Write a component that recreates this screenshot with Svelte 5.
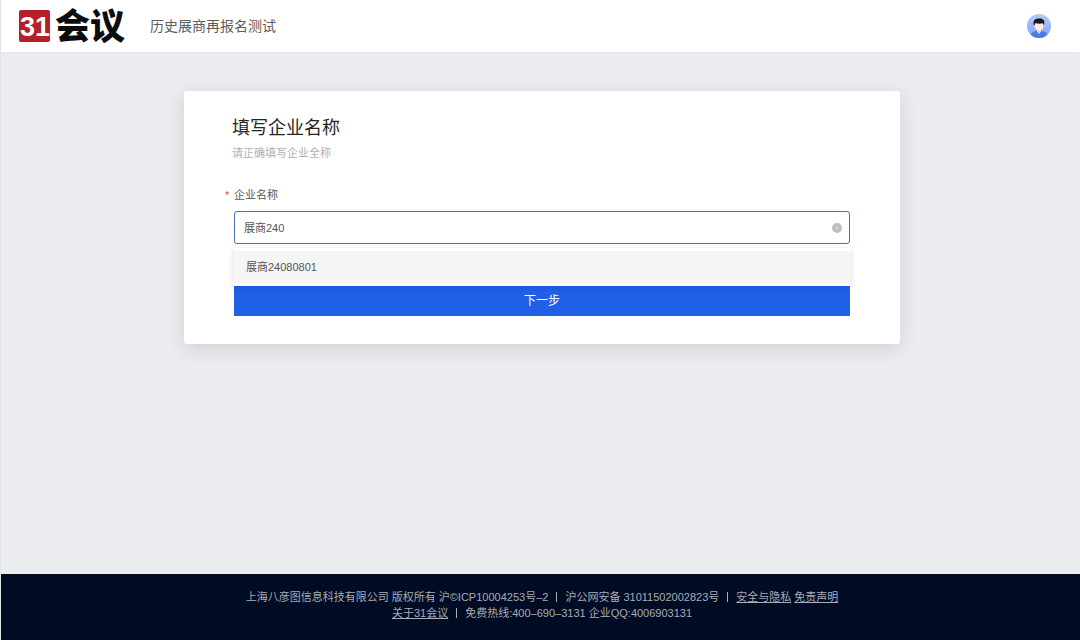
<script lang="ts">
  let company = $state("展商240");
  let suggestions = $state(["展商24080801"]);
  let open = $state(true);

  function pick(name: string) {
    company = name;
    open = false;
  }

  function clear() {
    company = "";
    open = false;
  }
</script>

<div class="page">
  <header class="topbar">
    <svg class="logo" width="112" height="52" viewBox="0 0 112 52" role="img" aria-label="31会议">
      <rect x="1" y="10" width="31" height="32" rx="2" fill="#b51f29" />
      <text class="logo-num" x="2" y="36">31</text>
      <text class="logo-name" x="37" y="39">会议</text>
    </svg>
    <span class="event">历史展商再报名测试</span>
    <button class="avatar" type="button" aria-label="用户">
      <svg width="24" height="24" viewBox="0 0 24 24" aria-hidden="true">
        <defs>
          <linearGradient id="sky" x1="0" y1="0" x2="0" y2="1">
            <stop offset="0" stop-color="#b4cbfa" />
            <stop offset="1" stop-color="#7fa3f2" />
          </linearGradient>
          <clipPath id="round"><circle cx="12" cy="12" r="12" /></clipPath>
        </defs>
        <g clip-path="url(#round)">
          <rect width="24" height="24" fill="url(#sky)" />
          <path d="M3 24c0-4.500 2.500-6.300 6-7h6c3.500.7 6 2.500 6 7z" fill="#4a7ce8" />
          <path d="M10 14h4v3.500l-2 2.500-2-2.500z" fill="#f3d3c6" />
          <path d="M7.500 8.500h9v3c0 3-2 5-4.500 5s-4.500-2-4.500-5z" fill="#fdebe3" />
          <path d="M6.800 11C5.800 7.500 7.200 4.800 11 4.600c4.200-.5 7 1.400 6.200 5l-.7 1.700-.8-2c-2.500.6-5.200.4-7.200-.2l-.8 1.900z" fill="#17181f" />
        </g>
      </svg>
    </button>
  </header>

  <main class="content">
    <form class="card" onsubmit={(e) => e.preventDefault()}>
      <h1>填写企业名称</h1>
      <p class="hint">请正确填写企业全称</p>

      <label for="company"><span class="star">*</span>企业名称</label>
      <div class="field">
        <input id="company" type="text" autocomplete="off" required bind:value={company} oninput={() => (open = true)} />
        <button class="clear" type="button" aria-label="清空" onclick={clear}>
          <svg width="10" height="10" viewBox="0 0 10 10" aria-hidden="true">
            <circle cx="5" cy="5" r="5" fill="#bfbfbf" />
            <path d="M3.500 3.500l3 3m0-3l-3 3" stroke="#d2d2d2" stroke-width="1" />
          </svg>
        </button>
        {#if open}
          <ul class="menu">
            {#each suggestions as name (name)}
              <li><button type="button" onclick={() => pick(name)}>{name}</button></li>
            {/each}
          </ul>
        {/if}
      </div>

      <button class="next" type="submit">下一步</button>
    </form>
  </main>

  <footer>
    <div>上海八彦图信息科技有限公司 版权所有 沪©ICP10004253号–2<i></i>沪公网安备 31011502002823号<i></i><a href="#privacy">安全与隐私</a> <a href="#disclaimer">免责声明</a></div>
    <div><a href="#about">关于31会议</a><i></i>免费热线:400–690–3131 企业QQ:4006903131</div>
  </footer>
</div>

<style>
  :global(body) {
    margin: 0;
  }
  .page {
    box-sizing: border-box;
    min-height: 100vh;
    display: flex;
    flex-direction: column;
    border-left: 1px solid #e4e5e8;
    background: #ebecf0;
    color: #555;
    font-family: "Liberation Sans", "Noto Sans CJK SC", sans-serif;
    font-size: 11px;
    line-height: 16px;
  }
  button,
  input {
    font: inherit;
    color: inherit;
  }
  button {
    padding: 0;
    border: 0;
    background: none;
    cursor: pointer;
  }

  .topbar {
    display: flex;
    align-items: center;
    height: 52px;
    padding: 0 29px 0 17px;
    background: #fff;
    box-shadow: 0 1px 2px rgba(0, 0, 0, 0.03);
  }
  .logo {
    flex: none;
    overflow: visible;
  }
  .logo-num {
    font: bold 27px "Liberation Sans", sans-serif;
    fill: #fff;
  }
  .logo-name {
    font: 900 35px "Noto Sans CJK SC", sans-serif;
    fill: #0c0c0c;
  }
  .event {
    margin-left: 20px;
    font-size: 14px;
    line-height: 20px;
    color: #5c5c5c;
  }
  .avatar {
    display: flex;
    margin-left: auto;
  }

  .content {
    flex: 1;
    padding: 39px 20px 40px 23px;
  }
  .card {
    box-sizing: border-box;
    max-width: 716px;
    margin: 0 auto;
    padding: 23px 50px 28px;
    border-radius: 3px;
    background: #fff;
    box-shadow: 0 5px 18px rgba(40, 50, 60, 0.14);
  }
  h1,
  .hint {
    margin: 0 0 0 -2px;
  }
  h1 {
    font-size: 18px;
    font-weight: 400;
    line-height: 28px;
    color: #262626;
  }
  .hint {
    padding: 3px 0 26px;
    color: #b0b0b0;
  }
  label {
    display: block;
    margin-left: -9px;
  }
  .star {
    display: inline-block;
    width: 9px;
    color: #f04b4b;
  }
  .field {
    position: relative;
    margin: 8px 0 42px;
  }
  input {
    display: block;
    box-sizing: border-box;
    width: 100%;
    height: 33px;
    padding: 0 32px 2px 9px;
    border: 1px solid #4a6cc0;
    border-radius: 3px;
    outline: none;
    background: #fff;
  }
  .clear {
    position: absolute;
    top: 12px;
    right: 8px;
    display: flex;
  }
  .menu {
    position: absolute;
    top: 100%;
    left: -1px;
    right: -1px;
    margin: 4px 0 0;
    padding: 3px 0;
    list-style: none;
    border-radius: 2px;
    background: #fff;
    box-shadow: 0 1px 5px rgba(0, 0, 0, 0.15);
  }
  .menu button {
    display: block;
    width: 100%;
    padding: 8px 13px;
    background: #f5f5f5;
    text-align: left;
  }
  .next {
    display: block;
    width: 100%;
    height: 30px;
    background: #2060e6;
    color: #fff;
    font-size: 12px;
  }

  footer {
    padding: 15px 0 19px 3px;
    background: #000b24;
    color: #a9adb6;
    text-align: center;
  }
  footer a {
    color: inherit;
    text-decoration: underline;
  }
  footer i {
    display: inline-block;
    width: 1px;
    height: 10px;
    margin: 0 8px;
    background: #a9adb6;
    vertical-align: -1px;
  }
</style>
